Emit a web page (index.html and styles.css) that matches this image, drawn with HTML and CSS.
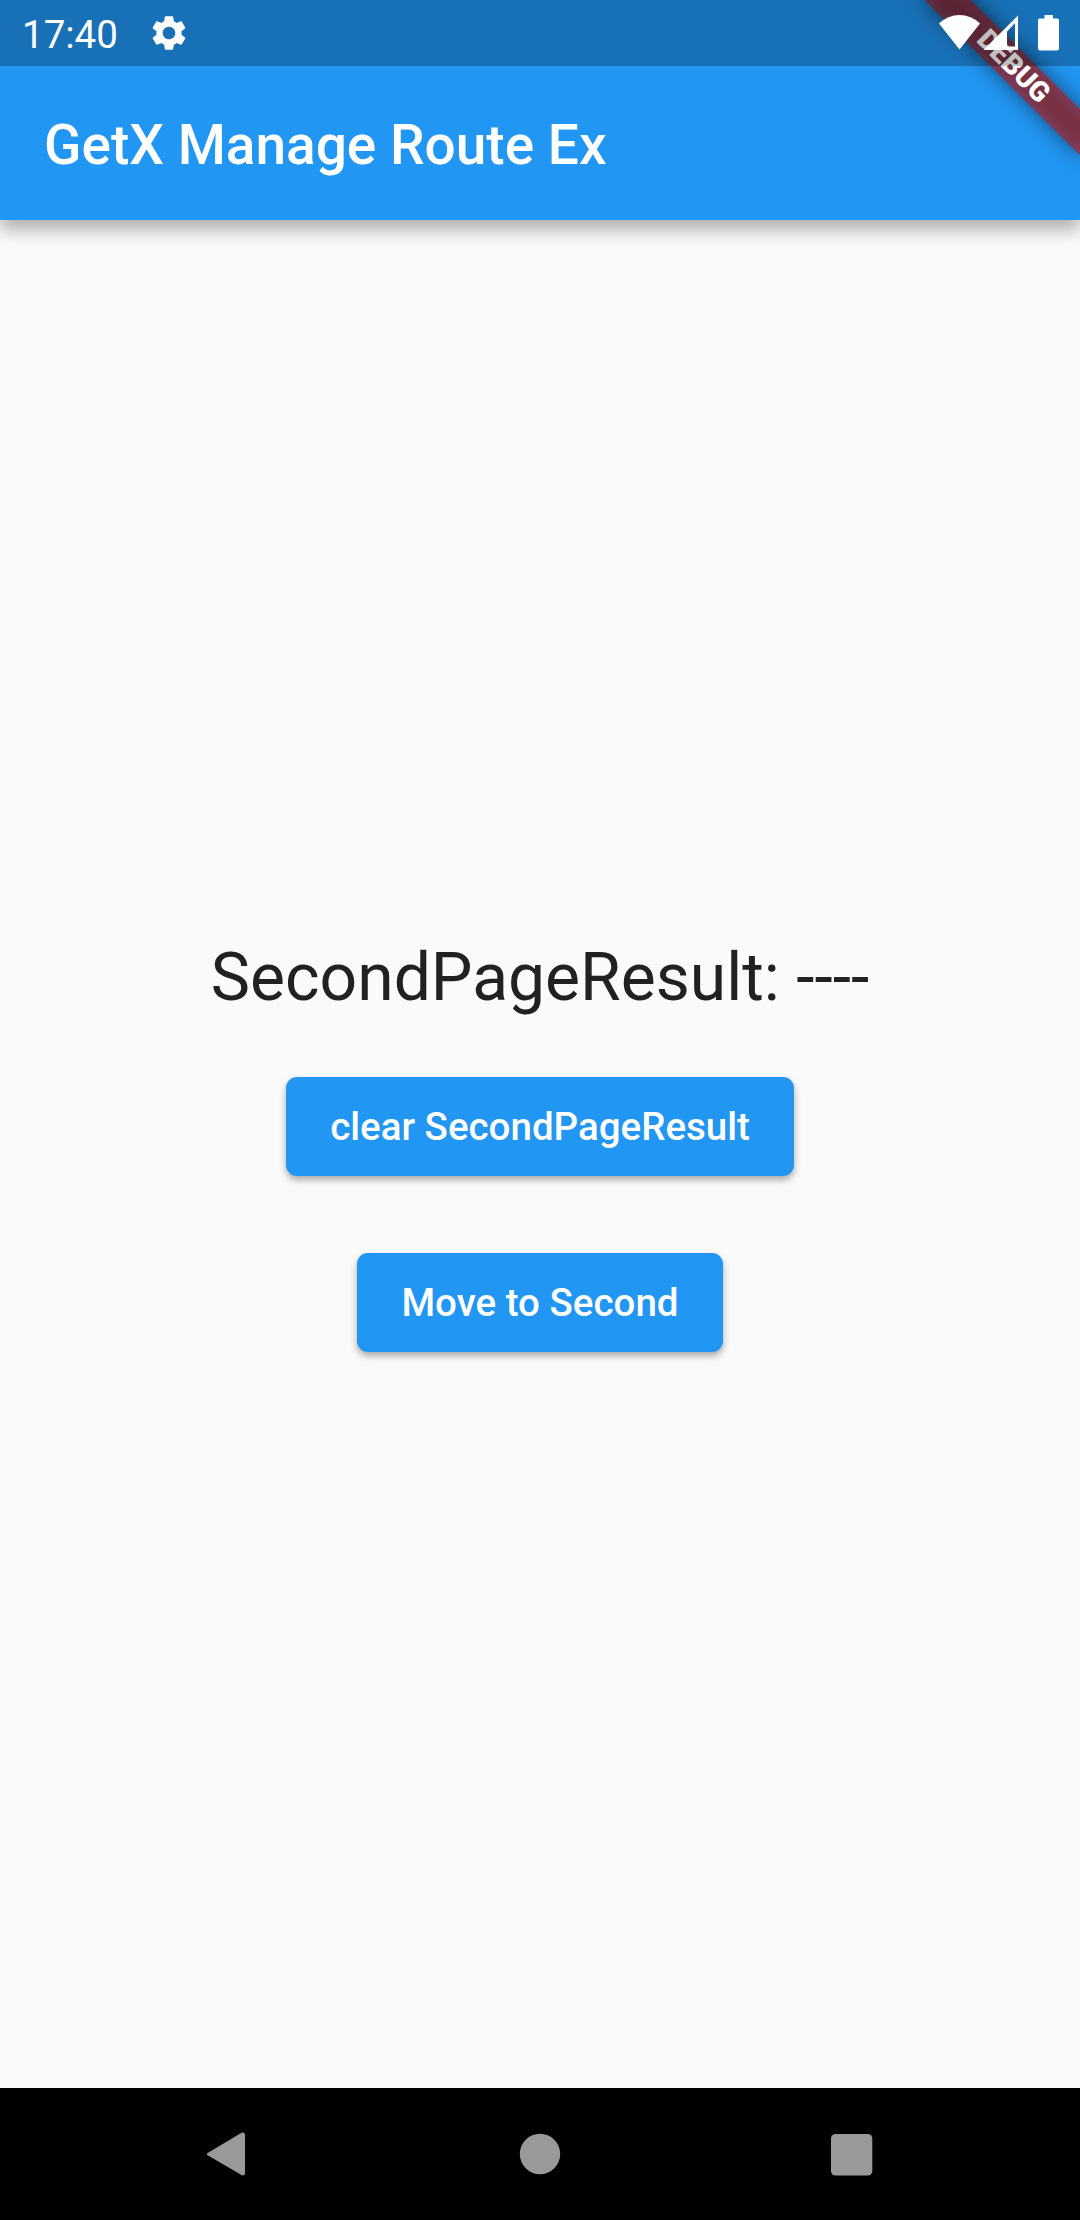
FILE: index.html
```html
<!DOCTYPE html>
<html lang="en">
<head>
<meta charset="utf-8">
<title>GetX Manage Route Ex</title>
<link rel="stylesheet" href="styles.css">
</head>
<body>
<div class="screen">
  <header class="top">
    <div class="status">
      <span class="clock">17:40</span>
      <svg class="gear" viewBox="0 0 24 24"><path d="M19.14 12.94c.04-.3.06-.61.06-.94 0-.32-.02-.64-.07-.94l2.03-1.58c.18-.14.23-.41.12-.61l-1.92-3.32c-.12-.22-.37-.29-.59-.22l-2.39.96c-.5-.38-1.03-.7-1.62-.94l-.36-2.54c-.04-.24-.24-.41-.48-.41h-3.84c-.24 0-.43.17-.47.41l-.36 2.54c-.59.24-1.13.57-1.62.94l-2.39-.96c-.22-.08-.47 0-.59.22L2.74 8.87c-.12.21-.08.47.12.61l2.03 1.58c-.05.3-.09.63-.09.94s.02.64.07.94l-2.03 1.58c-.18.14-.23.41-.12.61l1.92 3.32c.12.22.37.29.59.22l2.39-.96c.5.38 1.03.7 1.62.94l.36 2.54c.05.24.24.41.48.41h3.84c.24 0 .44-.17.47-.41l.36-2.54c.59-.24 1.13-.56 1.62-.94l2.39.96c.22.08.47 0 .59-.22l1.92-3.32c.12-.22.07-.47-.12-.61l-2.01-1.58zM12 15.6c-1.98 0-3.6-1.62-3.6-3.6s1.62-3.6 3.6-3.6 3.6 1.62 3.6 3.6-1.62 3.6-3.6 3.6z"/></svg>
      <svg class="signals" viewBox="0 0 122 38">
        <path d="M0 9.5Q9 1 20.500 1T41 9.500L20.500 35.500z"/>
        <path fill-rule="evenodd" d="M79 1.500V36H44.500zM76 9L68 17.500V32.500H76z"/>
        <path d="M105.500 1H114V4.500H118.500Q120 4.500 120 6V34.500Q120 36.500 118 36.500H101Q99 36.500 99 34.500V6Q99 4.500 100.500 4.500H105.500z"/>
      </svg>
    </div>
    <h1 class="title">GetX Manage Route Ex</h1>
  </header>
  <div class="debug">DEBUG</div>
  <main class="body">
    <p class="result">SecondPageResult: ----</p>
    <button class="btn">clear SecondPageResult</button>
    <button class="btn">Move to Second</button>
  </main>
  <nav class="nav">
    <svg class="key" viewBox="0 0 48 48"><path d="M5.500 22.500 38.500 2.800Q42 1.500 42 5V43Q42 46.500 38.500 45L5.500 25.800Q2 24 5.500 22.500z"/></svg>
    <svg class="key" viewBox="0 0 48 48"><circle cx="24" cy="24" r="20.200"/></svg>
    <svg class="key" viewBox="0 0 48 48"><rect x="4" y="4" width="41.300" height="41.500" rx="4.500"/></svg>
  </nav>
</div>
</body>
</html>
```
FILE: styles.css
```css
* { box-sizing: border-box; }
body {
  margin: 0;
  font-family: Roboto, "Liberation Sans", sans-serif;
}
.screen {
  position: relative;
  display: flex;
  flex-direction: column;
  width: 1080px;
  height: 2220px;
  overflow: hidden;
  background: #fafafa;
}
.top {
  height: 220px;
  background: #2196f3;
  box-shadow: 0 10px 16px rgba(0,0,0,.3);
}
.status {
  position: relative;
  z-index: 2;
  display: flex;
  align-items: center;
  height: 66px;
  padding: 0 19px 0 22px;
  background: rgba(0,0,0,.25);
  color: #fff;
}
.status svg { fill: #fff; }
.clock {
  width: 97px;
  font-size: 38.5px;
  line-height: 64px;
  padding-top: 4px;
}
.gear { width: 42px; height: 42px; margin-left: 28.500px; }
.signals { width: 122px; height: 38px; margin-left: auto; }
.title {
  margin: 0;
  padding: 2px 0 0 44px;
  font-size: 55px;
  font-weight: 500;
  line-height: 154px;
  color: #fff;
}
.debug {
  position: absolute;
  z-index: 1;
  left: 970px;
  top: 77px;
  width: 220px;
  height: 33px;
  transform: rotate(45deg);
  transform-origin: 110px -77px;
  font-size: 28.05px;
  font-weight: 900;
  line-height: 33px;
  text-align: center;
  color: #fff;
}
/* soft shadow showing through the translucent ribbon */
.debug::before,
.debug::after {
  content: "";
  position: absolute;
  inset: 0;
}
.debug::before {
  z-index: -2;
  background: rgba(0,0,0,.5);
  filter: blur(10.9px);
}
.debug::after {
  z-index: -1;
  background: rgba(183,28,28,.627);
}
.body {
  flex: 1;
  display: flex;
  flex-direction: column;
  align-items: center;
  justify-content: center;
}
.result {
  margin: 0 0 61px;
  font-size: 66px;
  line-height: 77px;
  color: #212121;
}
.btn {
  height: 99px;
  margin: 0 0 77px;
  padding: 0 44px;
  border: 0;
  border-radius: 11px;
  background: #2196f3;
  box-shadow: 0 4px 7px rgba(0,0,0,.32);
  color: #fff;
  font: 500 38.5px/99px Roboto, "Liberation Sans", sans-serif;
}
.btn:last-child { margin-bottom: 17px; }
.nav {
  display: flex;
  align-items: center;
  justify-content: space-between;
  height: 132px;
  padding: 0 205px 0 203px;
  background: #000;
}
.key { width: 48px; height: 48px; fill: #999; }
.key:nth-child(2) { margin-left: 2px; }
```
